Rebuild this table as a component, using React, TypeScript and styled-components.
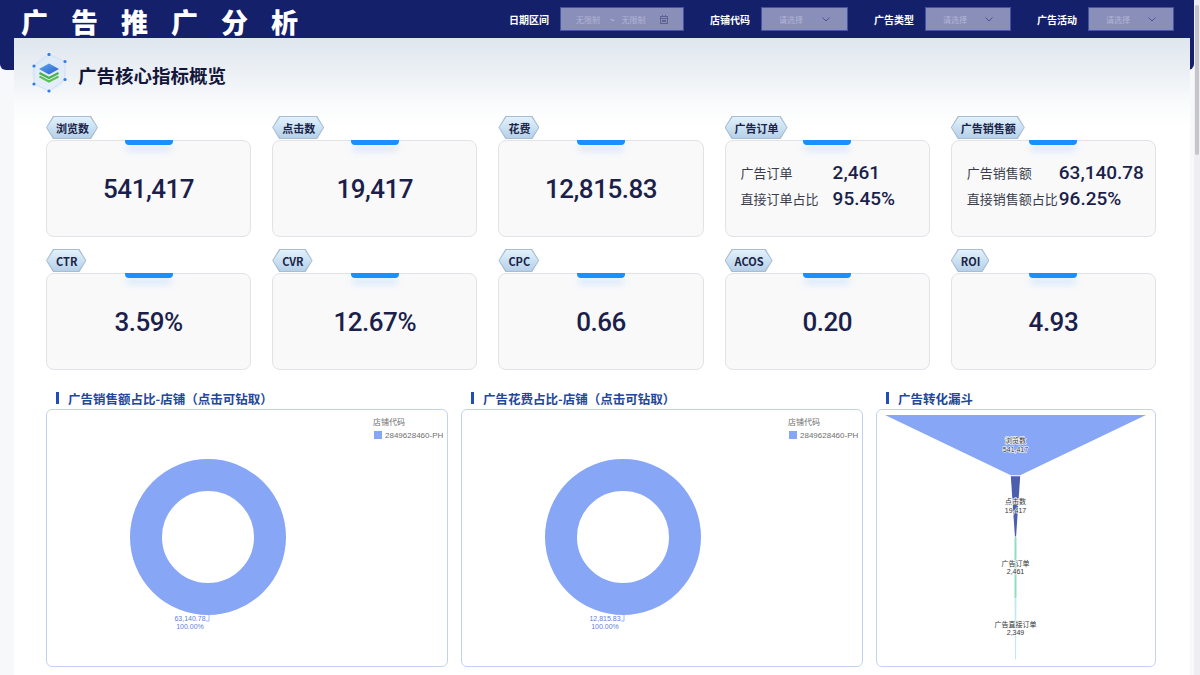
import React from "react";
import styled, { createGlobalStyle } from "styled-components";

interface Kpi {
  label: string;
  value?: string;
  rows?: { label: string; value: string }[];
}

const kpis: Kpi[] = [
  { label: "浏览数", value: "541,417" },
  { label: "点击数", value: "19,417" },
  { label: "花费", value: "12,815.83" },
  {
    label: "广告订单",
    rows: [
      { label: "广告订单", value: "2,461" },
      { label: "直接订单占比", value: "95.45%" },
    ],
  },
  {
    label: "广告销售额",
    rows: [
      { label: "广告销售额", value: "63,140.78" },
      { label: "直接销售额占比", value: "96.25%" },
    ],
  },
  { label: "CTR", value: "3.59%" },
  { label: "CVR", value: "12.67%" },
  { label: "CPC", value: "0.66" },
  { label: "ACOS", value: "0.20" },
  { label: "ROI", value: "4.93" },
];

const funnel = [
  { name: "浏览数", value: 541417, color: "#88a6f6" },
  { name: "点击数", value: 19417, color: "#4b5fae" },
  { name: "广告订单", value: 2461, color: "#93dcc2" },
  { name: "广告直接订单", value: 2349, color: "#c2e6f2" },
];

const fmt = (n: number) => n.toLocaleString("en-US");

const LayersIcon = () => (
  <svg width="40" height="40" viewBox="0 0 40 40">
    <defs>
      <linearGradient id="topFace" x1="0" y1="0" x2="1" y2="1">
        <stop offset="0" stopColor="#5ea2f4" />
        <stop offset="1" stopColor="#2a64c9" />
      </linearGradient>
    </defs>
    <circle cx="20" cy="20" r="17" fill="#d9e9fb" opacity="0.55" />
    <polygon
      points="20,1.5 36,8.5 36,26.5 20,38 5,31 5,13"
      fill="none"
      stroke="#b9d3f4"
      strokeWidth="0.5"
    />
    {[
      [20, 1.5],
      [36, 8.5],
      [36, 26.5],
      [20, 38],
      [5, 31],
      [5, 13],
    ].map(([x, y], i) => (
      <circle key={i} cx={x} cy={y} r="1.6" fill="#2e7bf5" />
    ))}
    <polyline points="10.5,20 20,25 29.5,20" fill="none" stroke="#47b14a" strokeWidth="2" />
    <polyline points="10.5,23.5 20,28.5 29.5,23.5" fill="none" stroke="#5cc15a" strokeWidth="2" />
    <polygon points="20,10.5 30,16 20,21.5 10,16" fill="url(#topFace)" />
  </svg>
);

const CalendarIcon = () => (
  <svg width="8" height="9" viewBox="0 0 8 9">
    <rect x="0.5" y="1.5" width="7" height="7" fill="none" stroke="#5d6291" />
    <line x1="0.5" y1="3.5" x2="7.5" y2="3.5" stroke="#5d6291" />
    <line x1="2.5" y1="0" x2="2.5" y2="2" stroke="#5d6291" />
    <line x1="5.5" y1="0" x2="5.5" y2="2" stroke="#5d6291" />
    <rect x="2" y="5" width="4" height="2" fill="#5d6291" />
  </svg>
);

const Chevron = () => (
  <svg width="8" height="5" viewBox="0 0 8 5">
    <polyline points="0.5,0.5 4,4 7.5,0.5" fill="none" stroke="#4b5191" strokeWidth="1" />
  </svg>
);

const DonutChart: React.FC<{ value: string }> = ({ value }) => (
  <svg width="100%" height="100%" viewBox="0 0 400 256">
    <circle cx="161" cy="127" r="62" fill="none" stroke="#88a6f6" strokeWidth="32" />
    <path d="M162 205 V211 H159" fill="none" stroke="#88a6f6" strokeWidth="0.8" />
    <text x="143" y="210.5" fontSize="7" fill="#5f7fd6" textAnchor="middle" fontFamily="'Liberation Sans', sans-serif">
      {value}
    </text>
    <text x="143" y="218.5" fontSize="7" fill="#5f7fd6" textAnchor="middle" fontFamily="'Liberation Sans', sans-serif">
      100.00%
    </text>
    <text x="326" y="14.5" fontSize="8" fill="#707070" fontFamily="'Noto Sans CJK SC', sans-serif">
      店铺代码
    </text>
    <rect x="327" y="21" width="8" height="8" fill="#88a6f6" />
    <text x="338" y="28" fontSize="8" fill="#707070" fontFamily="'Liberation Sans', sans-serif">
      2849628460-PH
    </text>
  </svg>
);

const FunnelChart = () => {
  const cx = 138.5;
  const full = 261;
  const max = funnel[0].value;
  return (
    <svg width="100%" height="100%" viewBox="0 0 278 256">
      {funnel.map((s, i) => {
        const top = 5 + i * 61.3;
        const bottom = top + 60.3;
        const w1 = Math.max((s.value / max) * full, 1);
        const next = funnel[i + 1];
        const w2 = next ? Math.max((next.value / max) * full, 1) : 0;
        const thin = w1 < 3;
        const mid = top + 30;
        return (
          <g key={s.name}>
            <polygon
              points={`${cx - w1 / 2},${top} ${cx + w1 / 2},${top} ${cx + w2 / 2},${bottom} ${cx - w2 / 2},${bottom}`}
              fill={s.color}
              stroke={thin ? s.color : "none"}
              strokeWidth={thin ? 0.8 : 0}
            />
            <text
              x={cx}
              y={mid - 2}
              fontSize="7"
              fill="#333"
              textAnchor="middle"
              stroke="#fff"
              strokeWidth="1.2"
              paintOrder="stroke"
              fontFamily="'Noto Sans CJK SC', sans-serif"
            >
              {s.name}
            </text>
            <text
              x={cx}
              y={mid + 6.5}
              fontSize="7"
              fill="#333"
              textAnchor="middle"
              stroke="#fff"
              strokeWidth="1.2"
              paintOrder="stroke"
              fontFamily="'Liberation Sans', sans-serif"
            >
              {fmt(s.value)}
            </text>
          </g>
        );
      })}
    </svg>
  );
};

const App: React.FC = () => {
  return (
    <>
      <GlobalStyle />
      <Shell>
        <Content>
          <Header>
            <HeaderBar>
              <PageTitle>广告推广分析</PageTitle>
              <Filters>
                <FilterItem>
                  <FilterLabel>日期区间</FilterLabel>
                  <DateRange>
                    <Placeholder>无限制</Placeholder>
                    <Tilde>~</Tilde>
                    <Placeholder>无限制</Placeholder>
                    <IconSlot>
                      <CalendarIcon />
                    </IconSlot>
                  </DateRange>
                </FilterItem>
                <FilterItem>
                  <FilterLabel>店铺代码</FilterLabel>
                  <Select $width={87}>
                    <Placeholder>请选择</Placeholder>
                    <Chevron />
                  </Select>
                </FilterItem>
                <FilterItem>
                  <FilterLabel>广告类型</FilterLabel>
                  <Select $width={86}>
                    <Placeholder>请选择</Placeholder>
                    <Chevron />
                  </Select>
                </FilterItem>
                <FilterItem>
                  <FilterLabel>广告活动</FilterLabel>
                  <Select $width={86}>
                    <Placeholder>请选择</Placeholder>
                    <Chevron />
                  </Select>
                </FilterItem>
              </Filters>
            </HeaderBar>
          </Header>

          <Panel>
            <SectionHeader>
              <LayersIcon />
              <SectionTitle>广告核心指标概览</SectionTitle>
            </SectionHeader>

            <KpiGrid>
              {kpis.map((k) => (
                <KpiItem key={k.label}>
                  <Tag>{k.label}</Tag>
                  <Card>
                    {k.rows ? (
                      <DetailGrid>
                        {k.rows.map((r) => (
                          <React.Fragment key={r.label}>
                            <DetailLabel>{r.label}</DetailLabel>
                            <DetailValue>{r.value}</DetailValue>
                          </React.Fragment>
                        ))}
                      </DetailGrid>
                    ) : (
                      <BigValue>{k.value}</BigValue>
                    )}
                  </Card>
                </KpiItem>
              ))}
            </KpiGrid>

            <ChartGrid>
              <ChartColumn>
                <ChartTitle>广告销售额占比-店铺（点击可钻取）</ChartTitle>
                <ChartBox>
                  <DonutChart value="63,140.78" />
                </ChartBox>
              </ChartColumn>
              <ChartColumn>
                <ChartTitle>广告花费占比-店铺（点击可钻取）</ChartTitle>
                <ChartBox>
                  <DonutChart value="12,815.83" />
                </ChartBox>
              </ChartColumn>
              <ChartColumn>
                <ChartTitle>广告转化漏斗</ChartTitle>
                <ChartBox>
                  <FunnelChart />
                </ChartBox>
              </ChartColumn>
            </ChartGrid>
          </Panel>
        </Content>
        <ScrollRail>
          <ScrollThumb />
        </ScrollRail>
      </Shell>
    </>
  );
};

// Styled Components
const GlobalStyle = createGlobalStyle`
  html, body {
    margin: 0;
    padding: 0;
    height: 100%;
    overflow: hidden;
  }

  body {
    background: #f7f8fa;
    font-family: "Noto Sans CJK SC", "Noto Sans", sans-serif;
  }
`;

const Shell = styled.div`
  display: flex;
  height: 100vh;
`;

const Content = styled.div`
  flex: 1;
  min-width: 0;
  overflow: hidden;
  background: #f7f8fa;
`;

const ScrollRail = styled.div`
  width: 6px;
  flex-shrink: 0;
  background: #efeff1;
`;

const ScrollThumb = styled.div`
  height: 150px;
  margin: 5px 1px 0;
  background: #c6c6ca;
  border-radius: 2px;
`;

const Header = styled.header`
  height: 70px;
  background: #15206b;
  border-radius: 0 0 6px 6px;
`;

const HeaderBar = styled.div`
  display: flex;
  align-items: center;
  height: 38px;
  padding: 0 20px 0 21px;
`;

const PageTitle = styled.h1`
  margin: 4px 0 0;
  font-family: "Noto Sans CJK SC", sans-serif;
  font-size: 27px;
  font-weight: 900;
  letter-spacing: 23px;
  line-height: 1;
  color: #ffffff;
  white-space: nowrap;
`;

const Filters = styled.div`
  display: flex;
  align-items: center;
  gap: 26px;
  margin-left: auto;
`;

const FilterItem = styled.div`
  display: flex;
  align-items: center;
  gap: 11px;
`;

const FilterLabel = styled.span`
  color: #ffffff;
  font-size: 10px;
  font-weight: 700;
  white-space: nowrap;
`;

const FieldBase = styled.div`
  display: flex;
  align-items: center;
  height: 24px;
  box-sizing: border-box;
  background: #8a8fba;
  border: 1px solid #4652a3;
`;

const DateRange = styled(FieldBase)`
  width: 124px;
  padding: 0 15px 0 15px;
`;

const Select = styled(FieldBase)<{ $width: number }>`
  width: ${(p) => p.$width}px;
  justify-content: space-between;
  padding: 0 17px 0 17px;
`;

const Placeholder = styled.span`
  color: #b1b5d6;
  font-size: 8px;
  white-space: nowrap;
`;

const Tilde = styled.span`
  color: #c8cbe4;
  font-size: 8px;
  margin: 0 7px 0 10px;
`;

const IconSlot = styled.span`
  display: flex;
  margin-left: auto;
`;

const Panel = styled.main`
  position: relative;
  margin: -32px 4px 0 14px;
  padding: 0 34px 30px 32px;
  background: linear-gradient(180deg, #dfe6ee 0px, #eef2f6 40px, #fbfcfd 70px, #ffffff 90px);
`;

const SectionHeader = styled.div`
  display: flex;
  align-items: center;
  gap: 9px;
  height: 70px;
  margin-left: -17px;
`;

const SectionTitle = styled.h2`
  margin: 3px 0 0;
  font-size: 18.5px;
  font-weight: 700;
  color: #14173a;
`;

const KpiGrid = styled.div`
  display: grid;
  grid-template-columns: repeat(5, 1fr);
  column-gap: 21px;
  row-gap: 12px;
  margin-top: 8px;
`;

const KpiItem = styled.div`
  display: flex;
  flex-direction: column;
`;

const hexagon =
  "polygon(7px 0, calc(100% - 7px) 0, 100% 50%, calc(100% - 7px) 100%, 7px 100%, 0 50%)";

const Tag = styled.div`
  position: relative;
  z-index: 1;
  align-self: flex-start;
  display: flex;
  align-items: center;
  height: 23px;
  margin-bottom: 1px;
  padding: 0 9px 0 10px;
  font-size: 11px;
  font-weight: 700;
  color: #1b2346;
  font-family: "Noto Sans CJK SC", sans-serif;
  background: #a8bcd3;
  clip-path: ${hexagon};

  &::before {
    content: "";
    position: absolute;
    inset: 1px;
    z-index: -1;
    background: linear-gradient(180deg, #e2f1fb 0%, #c9e0f2 55%, #b6d0e8 100%);
    clip-path: ${hexagon};
  }
`;

const Card = styled.div`
  position: relative;
  display: flex;
  align-items: center;
  justify-content: center;
  height: 97px;
  box-sizing: border-box;
  background: #f9f9fa;
  border: 1px solid #e2e3e8;
  border-radius: 8px;

  &::before {
    content: "";
    position: absolute;
    top: -1px;
    left: 50%;
    width: 48px;
    height: 5px;
    margin-left: -24px;
    background: #1890ff;
    border-radius: 0 0 4px 4px;
    box-shadow: 0 6px 7px -1px rgba(64, 158, 255, 0.35);
  }
`;

const BigValue = styled.div`
  font-family: Roboto, "Liberation Sans", sans-serif;
  font-size: 26px;
  font-weight: 500;
  letter-spacing: -0.5px;
  color: #1b1f4a;
`;

const DetailGrid = styled.div`
  display: grid;
  grid-template-columns: 92px auto;
  align-items: center;
  row-gap: 6px;
  width: 100%;
  padding: 0 0 5px 15px;
`;

const DetailLabel = styled.span`
  font-size: 13px;
  color: #3a3c4c;
  white-space: nowrap;
  line-height: 20px;
`;

const DetailValue = styled.span`
  font-family: Roboto, "Liberation Sans", sans-serif;
  font-size: 19px;
  font-weight: 500;
  color: #1b1f4a;
  line-height: 20px;
  white-space: nowrap;
`;

const ChartGrid = styled.div`
  display: grid;
  grid-template-columns: 402px 402px 1fr;
  column-gap: 13px;
  margin-top: 21px;
`;

const ChartColumn = styled.section`
  display: flex;
  flex-direction: column;
  min-width: 0;
`;

const ChartTitle = styled.h3`
  display: flex;
  align-items: center;
  height: 14px;
  margin: 0 0 4px;
  padding-left: 10px;
  font-size: 12.5px;
  font-weight: 700;
  color: #24479a;
  white-space: nowrap;

  &::before {
    content: "";
    width: 3px;
    height: 12px;
    margin-right: 9px;
    background: #1f4fb5;
  }
`;

const ChartBox = styled.div`
  height: 258px;
  box-sizing: border-box;
  background: #ffffff;
  border: 1px solid #c2d3f1;
  border-radius: 6px;
  overflow: hidden;

  svg {
    display: block;
  }
`;

export default App;
